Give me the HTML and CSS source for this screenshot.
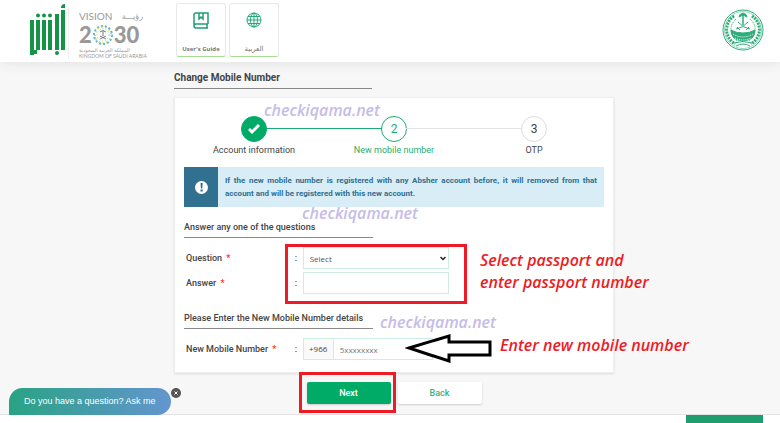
FILE: index.html
```html
<!DOCTYPE html>
<html lang="en">
<head>
    <meta charset="utf-8">
    <title>Change Mobile Number</title>
    <link rel="stylesheet" href="styles.css">
</head>
<body>
<header class="header">
    <div class="brand">
        <svg class="absher" width="36" height="54" viewBox="0 0 36 54" fill="none" stroke="#159447" stroke-width="4" role="img" aria-label="Absher">
            <path d="M3 17v35M3 49h5M9 17v30M15 17v30M21 17v30M28 11v36M34 7v40"/>
            <g fill="#159447" stroke="none">
                <circle cx="9" cy="12.500" r="2"/>
                <circle cx="15" cy="12.500" r="2"/>
                <circle cx="21" cy="12.500" r="2"/>
                <circle cx="28" cy="50" r="2"/>
                <path d="M32 5q0-4 4-4v4z"/>
            </g>
        </svg>
        <div class="vision">
            <div class="vision-top"><span>VISION</span><span lang="ar" dir="rtl">رؤيـــة</span></div>
            <div class="vision-year">
                <span>2</span>
                <svg width="22" height="22" viewBox="0 0 22 22" fill="none">
                    <circle cx="11" cy="11" r="9" stroke="#58b4cc" stroke-width="2" stroke-dasharray="2 2"/>
                    <circle cx="11" cy="11" r="8" stroke="#c8d544" stroke-width="2" stroke-dasharray="1 3"/>
                    <circle cx="11" cy="11" r="6" stroke="#8cc9b8" stroke-dasharray="1 2"/>
                    <path d="M11 7v5M8 8q3-3 6 0M8 15l6-3M14 15l-6-3" stroke="#777"/>
                </svg>
                <span>30</span>
            </div>
            <div class="vision-small" lang="ar" dir="rtl">المملكة العربية السعودية</div>
            <div class="vision-small">KINGDOM OF SAUDI ARABIA</div>
        </div>
    </div>
    <nav class="nav">
        <a class="nav-card" href="#guide">
            <svg width="16" height="17" viewBox="0 0 16 17" fill="none" stroke="#1f9e73" stroke-width="1.5">
                <path d="M15 12V1H3Q1 1 1 3v10M15 12H3q-2 0-2 2t2 2h12M14 12v4M6 1v6l2-2 2 2V1"/>
            </svg>
            <span>User's Guide</span>
        </a>
        <a class="nav-card" href="#arabic">
            <svg width="16" height="17" viewBox="0 0 16 17" fill="none" stroke="#22ab78">
                <circle cx="8" cy="8" r="7"/>
                <ellipse cx="8" cy="8" rx="3.5" ry="7"/>
                <path d="M8 1v14M1 8h14M2 4.500h12M2 11.500h12"/>
            </svg>
            <span lang="ar">العربية</span>
        </a>
    </nav>
    <svg class="ministry" width="42" height="42" viewBox="0 0 42 42" fill="none" stroke="#2fae7c" role="img" aria-label="Ministry of Interior">
        <circle cx="21" cy="21" r="20"/>
        <circle cx="21" cy="21" r="18.500" stroke-width=".5"/>
        <path d="M12 7C2 14 2 28 13 35M30 7c10 7 10 21-1 28" stroke-width="3" stroke-dasharray="2 1"/>
        <path d="M14 10C7 16 7 26 15 32M28 10c7 6 7 16-1 22" stroke-dasharray="1 1"/>
        <path d="M21 6v10" stroke-width="1.500"/>
        <path d="M17 8q0-3 4-4 4 1 4 4l-4-2z" fill="#2fae7c"/>
        <path d="M14 20q7-1 12-7M28 20q-7-1-12-7M15 18l3 3M27 18l-3 3"/>
        <path d="M9 21q5 3 12 3t12-3q0 10-12 11Q9 31 9 21z" fill="#2fae7c"/>
        <path d="M11 25q10 6 20 0M13 29q8 4 16 0" stroke="#fff" stroke-dasharray="1 1"/>
        <path d="M12 34q9-3 18 0M14 37q7-4 14 0"/>
    </svg>
</header>

<main class="main">
    <h1 class="title ruled">Change Mobile Number</h1>
    <form class="form">
        <section class="card">
            <ol class="steps">
                <li class="step done">
                    <span class="dot"><svg width="12" height="10" viewBox="0 0 12 10" fill="none" stroke="#fff" stroke-width="3"><path d="M1 5l3 3 7-7"/></svg></span>
                    Account information
                </li>
                <li class="step current"><span class="dot">2</span>New mobile number</li>
                <li class="step"><span class="dot">3</span>OTP</li>
            </ol>

            <div class="alert">
                <div class="alert-icon">
                    <svg width="13" height="13" viewBox="0 0 13 13"><circle cx="6.500" cy="6.500" r="6.500" fill="#fff"/><path d="M5.500 2h2.200l-.4 5.500H5.900zM5.500 8.500h2.200v2H5.500z" fill="#31708f"/></svg>
                </div>
                <p>If the new mobile number is registered with any Absher account before, it will removed from that account and will be registered with this new account.</p>
            </div>

            <h2 class="subtitle ruled">Answer any one of the questions</h2>
            <div class="row">
                <label for="question">Question <b class="req">*</b></label>
                <span class="colon">:</span>
                <div class="select-wrap">
                    <select class="field" id="question"><option>Select</option></select>
                    <svg width="6" height="5" viewBox="0 0 6 5" fill="none" stroke="#222" stroke-width="1.500"><path d="M.5 1L3 3.500 5.500 1"/></svg>
                </div>
            </div>
            <div class="row">
                <label for="answer">Answer <b class="req">*</b></label>
                <span class="colon">:</span>
                <input class="field" id="answer" type="text">
            </div>

            <h2 class="subtitle second ruled">Please Enter the New Mobile Number details</h2>
            <div class="row">
                <label for="mobile">New Mobile Number <b class="req">*</b></label>
                <span class="colon">:</span>
                <div class="phone">
                    <span class="prefix">+966</span>
                    <input class="field" id="mobile" type="tel" placeholder="5xxxxxxxx">
                </div>
            </div>
        </section>
        <div class="buttons">
            <button class="button next" type="button">Next</button>
            <button class="button back" type="button">Back</button>
        </div>
    </form>

    <!-- notes drawn over the form -->
    <div class="mark mark-one">checkiqama.net</div>
    <div class="mark mark-two">checkiqama.net</div>
    <div class="mark mark-three">checkiqama.net</div>
    <div class="frame frame-questions"></div>
    <div class="frame frame-next"></div>
    <p class="note note-passport">Select passport and<br>enter passport number</p>
    <p class="note note-mobile">Enter new mobile number</p>
    <svg class="arrow" width="88" height="30" viewBox="0 0 88 30" fill="#fff" stroke="#000" stroke-width="3"><path d="M4 15l40-12v6h41v13H44v6z"/></svg>
</main>

<footer class="footer">
    <div class="footer-tab"></div>
    <div class="chat">
        <a class="chat-bubble" href="#chat">Do you have a question? Ask me</a>
        <button class="chat-close" type="button" aria-label="Close">
            <svg width="10" height="10" viewBox="0 0 10 10" stroke="#fff"><circle cx="5" cy="5" r="5" fill="#555" stroke="none"/><path d="M3.500 3.500l3 3M6.500 3.500l-3 3"/></svg>
        </button>
    </div>
</footer>
</body>
</html>
```

FILE: styles.css
```css
* {
  box-sizing: border-box;
}

body {
  margin: 0;
  min-height: 100vh;
  display: flex;
  flex-direction: column;
  overflow: hidden;
  background-color: #f7f7f7;
  color: #444;
  font-family: Roboto, "Noto Sans", sans-serif;
  font-size: 9px;
}

h1, h2, p, ol {
  margin: 0;
  padding: 0;
}

.header {
  display: flex;
  align-items: flex-start;
  height: 62px;
  padding: 3px 16px 0 29px;
  background-color: white;
  box-shadow: 0 0 12px #ddd;
}

.brand {
  display: flex;
  width: 147px;
}

.absher {
  flex: none;
}

.vision {
  width: 64px;
  margin: 5px 0 0 3px;
  padding-left: 10px;
  box-sizing: content-box;
  border-left: 1px solid #eee;
  color: #999;
  font-family: Lato, "DejaVu Sans", sans-serif;
}

.vision-top {
  display: flex;
  justify-content: space-between;
  font-size: 10px;
  line-height: 17px;
}

.vision-top [lang="ar"] {
  font-size: 8px;
}

.vision-year {
  display: flex;
  align-items: center;
  height: 20px;
  font-size: 22px;
  font-weight: 900;
  line-height: 20px;
}

.vision-year svg {
  flex: none;
}

.vision-small {
  font-size: 5px;
  line-height: 6px;
  white-space: nowrap;
}

.vision-small[lang="ar"] {
  margin-top: 2px;
  text-align: left;
}

.nav {
  display: flex;
  gap: 3px;
}

.nav-card {
  display: flex;
  flex-direction: column;
  justify-content: space-between;
  align-items: center;
  width: 50px;
  height: 54px;
  padding: 8px 0 2px;
  border: 1px solid #e8e8e8;
  border-bottom-color: #a5dc92;
  border-radius: 3px;
  color: #777;
  font-family: "Open Sans", "DejaVu Sans", sans-serif;
  font-size: 6px;
  font-weight: bold;
  line-height: 10px;
  text-decoration: none;
}

.nav-card [lang="ar"] {
  font-size: 7px;
  font-weight: normal;
}

.ministry {
  margin: 6px 0 0 auto;
}

.main {
  position: relative;
  flex: 1;
  padding: 8px 166px 10px 174px;
}

.ruled::after {
  content: "";
  display: block;
  width: 45%;
  margin-top: 3px;
  border-bottom: 1px solid #888;
}

.title {
  font-size: 10px;
  font-weight: bold;
  line-height: 15px;
}

.card {
  margin-top: 8px;
  padding: 18px 9px 12px;
  background-color: white;
  border: 1px solid #eee;
  box-shadow: 0 1px 2px #ddd;
}

.steps {
  display: grid;
  grid-template-columns: repeat(3, 1fr);
  list-style: none;
}

.step {
  position: relative;
  display: flex;
  flex-direction: column;
  align-items: center;
  gap: 2px;
  line-height: 13px;
}

.step + .step::before {
  content: "";
  position: absolute;
  top: 12px;
  right: calc(50% + 12px);
  width: calc(100% - 24px);
  border-top: 1px solid #e3e3e3;
}

.step.current::before {
  border-color: #1fac70;
}

.dot {
  display: flex;
  align-items: center;
  justify-content: center;
  width: 26px;
  height: 26px;
  border: 1px solid #ddd;
  border-radius: 50%;
  font-size: 12px;
}

.done .dot {
  background-color: #00ab67;
  border-color: #00ab67;
}

.current {
  color: #1fac70;
}

.current .dot {
  border-color: #1fac70;
}

.alert {
  display: flex;
  margin-top: 10px;
  background-color: #d9edf7;
  color: #31708f;
  font-size: 8px;
  font-weight: bold;
  line-height: 13px;
  text-align: justify;
}

.alert-icon {
  display: flex;
  flex: none;
  align-items: center;
  justify-content: center;
  width: 34px;
  background-color: #31708f;
}

.alert p {
  padding: 7px;
}

.subtitle {
  margin: 14px 0 9px;
  font-size: 9px;
  font-weight: 500;
  line-height: 13px;
}

.subtitle.second {
  margin-top: 18px;
}

.row {
  display: grid;
  grid-template-columns: 26% 8px 35%;
  align-items: center;
  padding-left: 2px;
}

.row + .row {
  margin-top: 3px;
}

.row label {
  font-weight: 500;
}

.req {
  margin-left: 2px;
  color: #f33;
}

.colon {
  font-weight: 500;
}

.field {
  display: block;
  width: 100%;
  height: 22px;
  padding: 0 6px;
  border: 1px solid #cfeee2;
  border-radius: 0;
  background-color: white;
  color: #555;
  font-family: "Open Sans", sans-serif;
  font-size: 8px;
}

.field::placeholder {
  color: #777;
}

.select-wrap {
  position: relative;
}

select.field {
  appearance: none;
}

.select-wrap svg {
  position: absolute;
  top: 9px;
  right: 3px;
}

.phone {
  display: flex;
  width: 130px;
}

.prefix {
  flex: none;
  width: 30px;
  border: 1px solid #cfeee2;
  border-right: 0;
  background-color: #fafafa;
  font-family: "Open Sans", sans-serif;
  font-size: 8px;
  line-height: 20px;
  text-align: center;
}

.buttons {
  display: flex;
  justify-content: center;
  gap: 7px;
  margin-top: 9px;
}

.button {
  width: 84px;
  height: 22px;
  border: 0;
  border-radius: 2px;
  font-family: Roboto, sans-serif;
  font-size: 9px;
  font-weight: 500;
  box-shadow: 0 1px 2px #ccc;
}

.next {
  background-color: #00ab67;
  color: white;
}

.back {
  background-color: white;
  color: #35b27d;
}

.mark, .note {
  position: absolute;
  font-family: "Open Sans", sans-serif;
  font-size: 16px;
  font-style: italic;
  font-weight: 600;
  line-height: 22px;
  white-space: nowrap;
}

.mark {
  color: #c6bce8;
}

.mark-one {
  top: 37px;
  left: 264px;
}

.mark-two {
  top: 140px;
  left: 302px;
}

.mark-three {
  top: 249px;
  left: 380px;
}

.note {
  color: #ed1c24;
}

.note-passport {
  top: 187px;
  left: 480px;
}

.note-mobile {
  top: 272px;
  left: 500px;
}

.frame {
  position: absolute;
  border: 3px solid #ed1c24;
}

.frame-questions {
  top: 182px;
  left: 285px;
  width: 182px;
  height: 60px;
}

.frame-next {
  top: 310px;
  left: 299px;
  width: 97px;
  height: 41px;
}

.arrow {
  position: absolute;
  top: 271px;
  left: 405px;
}

.footer {
  position: relative;
  height: 9px;
  padding-right: 17px;
  border-top: 1px solid #e3e3e3;
  background-color: white;
}

.footer-tab {
  width: 77px;
  height: 8px;
  margin-left: auto;
  background-color: #1e9e6e;
}

.chat {
  position: absolute;
  bottom: 8px;
  left: 9px;
  display: flex;
}

.chat-bubble {
  padding: 0 15px;
  border-radius: 14px 14px 14px 0;
  background: linear-gradient(to right, #29a383, #6495d0);
  color: white;
  font-family: "Liberation Sans", sans-serif;
  font-size: 9px;
  line-height: 27px;
  text-decoration: none;
}

.chat-close {
  display: flex;
  align-self: flex-start;
  padding: 0;
  border: 0;
  background: none;
}
```
